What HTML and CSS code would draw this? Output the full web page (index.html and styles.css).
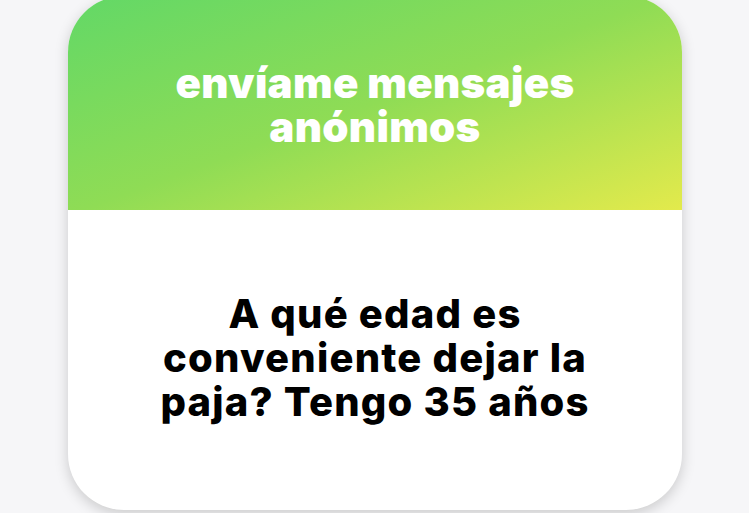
FILE: index.html
```html
<!DOCTYPE html>
<html lang="es">
<head>
<meta charset="utf-8">
<link rel="stylesheet" href="styles.css">
</head>
<body>
<div class="card">
  <div class="head">
    <h1 class="title">envíame mensajes anónimos</h1>
  </div>
  <div class="body">
    <p class="question">A qué edad es conveniente dejar la paja? Tengo 35 años</p>
  </div>
</div>
</body>
</html>
```
FILE: styles.css
```css
html, body {
  margin: 0;
  padding: 0;
  background: #f6f6f8;
  width: 749px;
  height: 513px;
  overflow: hidden;
}
body {
  font-family: Inter, "Noto Sans", sans-serif;
}
.card {
  margin: -4px 0 0 68px;
  width: 614px;
  height: 514px;
  border-radius: 56px;
  overflow: hidden;
  background: #fff;
  box-shadow: 0 4px 14px rgba(0,0,0,0.18);
  display: flex;
  flex-direction: column;
}
.head {
  height: 214px;
  flex: none;
  background: linear-gradient(160deg, #62d867 0%, #8fdc55 50%, #e3ea4c 100%);
  display: flex;
  justify-content: center;
  padding-top: 65px;
  box-sizing: border-box;
}
.title {
  margin: 0;
  width: 440px;
  color: #fff;
  font-size: 42px;
  font-weight: 900;
  line-height: 44px;
  text-align: center;
  letter-spacing: 0.3px;
}
.body {
  flex: 1;
  display: flex;
  justify-content: center;
  padding-top: 82px;
}
.question {
  margin: 0;
  width: 460px;
  color: #000;
  font-size: 40px;
  font-weight: 800;
  line-height: 44px;
  text-align: center;
  letter-spacing: 1.2px;
}
```
